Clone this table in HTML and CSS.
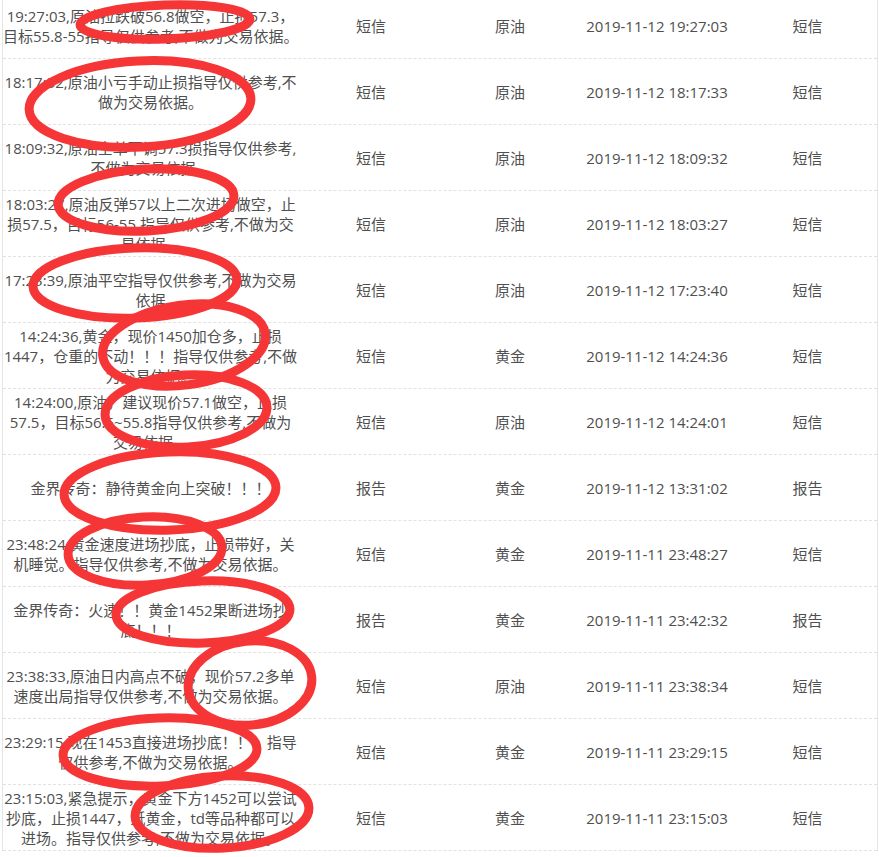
FILE: index.html
```html
<!DOCTYPE html>
<html lang="zh-CN">
<head>
<meta charset="utf-8">
<title>短信列表</title>
<link rel="stylesheet" href="styles.css">
</head>
<body>
<div class="list">
  <div class="row"><div class="cell msg">19:27:03,原油拉跌破56.8做空，止损57.3，<br>目标55.8-55指导仅供参考,不做为交易依据。</div><div class="cell">短信</div><div class="cell">原油</div><div class="cell">2019-11-12 19:27:03</div><div class="cell">短信</div></div>
  <div class="row"><div class="cell msg">18:17:32,原油小亏手动止损指导仅供参考,不<br>做为交易依据。</div><div class="cell">短信</div><div class="cell">原油</div><div class="cell">2019-11-12 18:17:33</div><div class="cell">短信</div></div>
  <div class="row"><div class="cell msg">18:09:32,原油空单下调57.3损指导仅供参考,<br>不做为交易依据。</div><div class="cell">短信</div><div class="cell">原油</div><div class="cell">2019-11-12 18:09:32</div><div class="cell">短信</div></div>
  <div class="row"><div class="cell msg">18:03:27,原油反弹57以上二次进场做空，止<br>损57.5，目标56-55 指导仅供参考,不做为交<br>易依据。</div><div class="cell">短信</div><div class="cell">原油</div><div class="cell">2019-11-12 18:03:27</div><div class="cell">短信</div></div>
  <div class="row"><div class="cell msg">17:23:39,原油平空指导仅供参考,不做为交易<br>依据</div><div class="cell">短信</div><div class="cell">原油</div><div class="cell">2019-11-12 17:23:40</div><div class="cell">短信</div></div>
  <div class="row"><div class="cell msg">14:24:36,黄金，现价1450加仓多，止损<br>1447，仓重的不动！！！指导仅供参考,不做<br>为交易依据。</div><div class="cell">短信</div><div class="cell">黄金</div><div class="cell">2019-11-12 14:24:36</div><div class="cell">短信</div></div>
  <div class="row"><div class="cell msg">14:24:00,原油，建议现价57.1做空，止损<br>57.5，目标56.5~55.8指导仅供参考,不做为<br>交易依据。</div><div class="cell">短信</div><div class="cell">原油</div><div class="cell">2019-11-12 14:24:01</div><div class="cell">短信</div></div>
  <div class="row"><div class="cell msg">金界传奇：静待黄金向上突破！！！</div><div class="cell">报告</div><div class="cell">黄金</div><div class="cell">2019-11-12 13:31:02</div><div class="cell">报告</div></div>
  <div class="row"><div class="cell msg">23:48:24,黄金速度进场抄底，止损带好，关<br>机睡觉。指导仅供参考,不做为交易依据。</div><div class="cell">短信</div><div class="cell">黄金</div><div class="cell">2019-11-11 23:48:27</div><div class="cell">短信</div></div>
  <div class="row"><div class="cell msg">金界传奇：火速！！黄金1452果断进场抄<br>底！！！</div><div class="cell">报告</div><div class="cell">黄金</div><div class="cell">2019-11-11 23:42:32</div><div class="cell">报告</div></div>
  <div class="row"><div class="cell msg">23:38:33,原油日内高点不破，现价57.2多单<br>速度出局指导仅供参考,不做为交易依据。</div><div class="cell">短信</div><div class="cell">原油</div><div class="cell">2019-11-11 23:38:34</div><div class="cell">短信</div></div>
  <div class="row"><div class="cell msg">23:29:15,现在1453直接进场抄底！！！指导<br>仅供参考,不做为交易依据。</div><div class="cell">短信</div><div class="cell">黄金</div><div class="cell">2019-11-11 23:29:15</div><div class="cell">短信</div></div>
  <div class="row"><div class="cell msg">23:15:03,紧急提示，黄金下方1452可以尝试<br>抄底，止损1447，纸黄金，td等品种都可以<br>进场。指导仅供参考,不做为交易依据。</div><div class="cell">短信</div><div class="cell">黄金</div><div class="cell">2019-11-11 23:15:03</div><div class="cell">短信</div></div>
</div>
<svg class="marks" width="879" height="857" viewBox="0 0 879 857" xmlns="http://www.w3.org/2000/svg">
  <g fill="none" stroke="#f63636" stroke-width="9">
    <ellipse cx="165" cy="22" rx="85" ry="17" transform="rotate(-2 165 22)"/>
    <ellipse cx="140" cy="104" rx="111" ry="43" transform="rotate(-3 140 104)"/>
    <ellipse cx="146" cy="200" rx="88" ry="31" transform="rotate(-3 146 200)"/>
    <ellipse cx="135" cy="283" rx="102" ry="35" transform="rotate(-2 135 283)"/>
    <ellipse cx="184" cy="345" rx="82" ry="40" transform="rotate(-8 184 345)"/>
    <ellipse cx="186" cy="411" rx="81" ry="36" transform="rotate(-3 186 411)"/>
    <ellipse cx="170" cy="491" rx="106" ry="39" transform="rotate(-2 170 491)"/>
    <ellipse cx="145" cy="551" rx="77" ry="34" transform="rotate(-3 145 551)"/>
    <ellipse cx="203" cy="612" rx="87" ry="31" transform="rotate(-2 203 612)"/>
    <ellipse cx="250" cy="683" rx="62" ry="42" transform="rotate(-6 250 683)"/>
    <ellipse cx="160" cy="752" rx="97" ry="34" transform="rotate(-2 160 752)"/>
    <ellipse cx="222" cy="812" rx="87" ry="36" transform="rotate(-3 222 812)"/>
  </g>
</svg>
</body>
</html>
```
FILE: styles.css
```css
html, body {
  margin: 0;
  padding: 0;
  background: #ffffff;
  overflow: hidden;
}
body {
  width: 879px;
  height: 857px;
  position: relative;
  font-family: "Open Sans", "Noto Sans CJK SC", sans-serif;
  font-size: 15px;
  line-height: 20px;
  color: #4f4f4f;
}
.list {
  margin: -7px 0 0 2px;
  width: 876px;
  box-sizing: border-box;
  border-left: 1px solid #e4e4e4;
  border-right: 1px solid #e4e4e4;
}
.row {
  display: grid;
  grid-template-columns: 295px 146px 132px 162px 1fr;
  height: 66px;
  box-sizing: border-box;
  border-bottom: 1px dashed #e2e2e2;
}
.cell {
  display: flex;
  align-items: center;
  justify-content: center;
  text-align: center;
  white-space: nowrap;
}
.cell.msg {
  display: block;
  align-self: center;
}
.marks {
  position: absolute;
  top: 0;
  left: 0;
  pointer-events: none;
}
```
